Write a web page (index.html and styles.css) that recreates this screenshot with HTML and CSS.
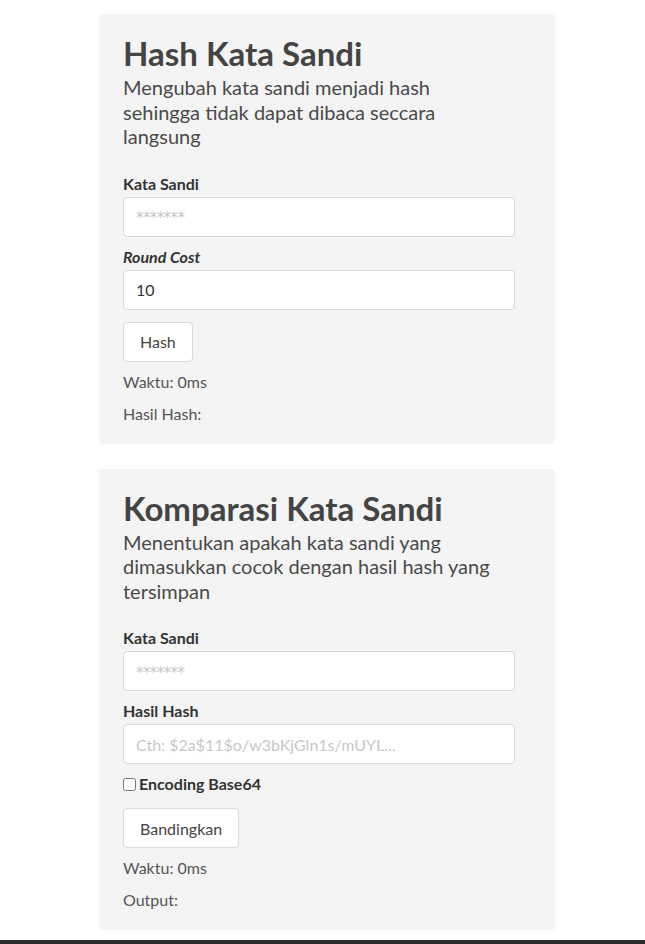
FILE: index.html
```html
<!DOCTYPE html>
<html lang="id">
<head>
<meta charset="utf-8">
<title>Bcrypt</title>
<link rel="stylesheet" href="styles.css">
</head>
<body>
<main class="page">
  <section class="card">
    <h1 class="title">Hash Kata Sandi</h1>
    <p class="desc">Mengubah kata sandi menjadi hash sehingga tidak dapat dibaca seccara langsung</p>
    <div class="form">
      <label class="label">Kata Sandi</label>
      <input class="input pw" type="password" placeholder="*******">
      <label class="label"><em>Round Cost</em></label>
      <input class="input" type="text" value="10">
      <button class="btn" type="button">Hash</button>
      <p class="info">Waktu: 0ms</p>
      <p class="info">Hasil Hash:</p>
    </div>
  </section>
  <section class="card">
    <h1 class="title">Komparasi Kata Sandi</h1>
    <p class="desc">Menentukan apakah kata sandi yang dimasukkan cocok dengan hasil hash yang tersimpan</p>
    <div class="form">
      <label class="label">Kata Sandi</label>
      <input class="input pw" type="password" placeholder="*******">
      <label class="label">Hasil Hash</label>
      <input class="input" type="text" placeholder="Cth: $2a$11$o/w3bKjGln1s/mUYL...">
      <label class="check"><input type="checkbox" class="checkbox"> Encoding Base64</label>
      <button class="btn" type="button">Bandingkan</button>
      <p class="info">Waktu: 0ms</p>
      <p class="info">Output:</p>
    </div>
  </section>
</main>
<footer class="footer"></footer>
</body>
</html>
```
FILE: styles.css
```css
html, body {
  margin: 0;
  padding: 0;
  background: #fff;
  font-family: "Lato", "Open Sans", sans-serif;
  color: #444;
}
.page {
  display: flex;
  flex-direction: column;
  gap: 25px;
  padding: 14px 0 10px 99px;
}
.card {
  width: 408px;
  background: #f4f4f4;
  border-radius: 4px;
  padding: 17px 24px 18px 24px;
}
.title {
  margin: 0;
  font-size: 33px;
  line-height: 44px;
  font-weight: 700;
  color: #444;
}
.desc {
  margin: 0;
  font-size: 20px;
  line-height: 24.5px;
  color: #4a4a4a;
  max-width: 380px;
}
.form {
  display: flex;
  flex-direction: column;
  align-items: flex-start;
  margin-top: 25px;
}
.label {
  font-size: 16px;
  font-weight: 700;
  color: #333;
  line-height: 20px;
  margin-bottom: 3px;
}
.label em {
  font-style: italic;
}
.input {
  box-sizing: border-box;
  width: 392px;
  height: 40px;
  border: 1px solid #d9d9d9;
  border-radius: 4px;
  background: #fff;
  padding: 0 12px;
  font-family: inherit;
  font-size: 16px;
  color: #333;
  margin: 0 0 10px 0;
}
.input::placeholder {
  color: #c8c8c8;
}
.pw::placeholder {
  font-family: "DejaVu Sans", sans-serif;
  font-size: 15px;
  letter-spacing: -0.6px;
}
.check {
  display: flex;
  align-items: center;
  gap: 3px;
  font-size: 16px;
  font-weight: 700;
  color: #333;
  line-height: 20px;
  margin-bottom: 12px;
}
.checkbox {
  margin: 0;
  width: 13px;
  height: 13px;
}
.btn {
  box-sizing: border-box;
  height: 40px;
  padding: 0 16px;
  border: 1px solid #d9d9d9;
  border-radius: 4px;
  background: #fff;
  font-family: inherit;
  font-size: 16px;
  color: #444;
  margin-top: 2px;
}
.info {
  margin: 8px 0 0 0;
  font-size: 16px;
  line-height: 24px;
  color: #555;
}
.footer {
  height: 10px;
  background: #2b2b2b;
}
```
